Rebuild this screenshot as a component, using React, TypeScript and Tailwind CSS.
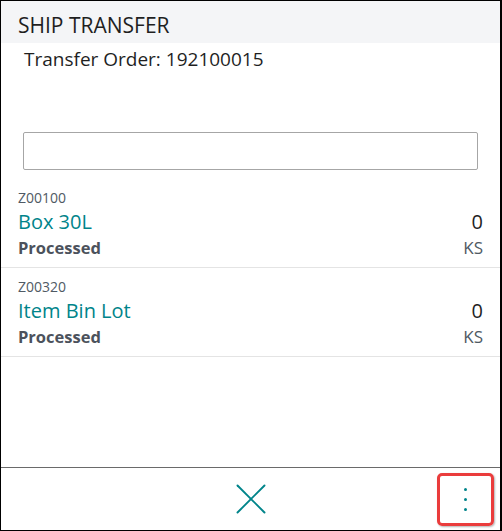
import { X } from 'lucide-react';

const items = [
  { code: 'Z00100', name: 'Box 30L', status: 'Processed', qty: '0', unit: 'KS' },
  { code: 'Z00320', name: 'Item Bin Lot', status: 'Processed', qty: '0', unit: 'KS' },
];

export default function App() {
  return (
    <div
      className="w-[502px] h-[531px] bg-white border-t border-l border-b border-r-2 border-black flex flex-col text-[#1f1f1f]"
      style={{ fontFamily: '"Open Sans", "Noto Sans", sans-serif' }}
    >
      {/* Header */}
      <div className="h-[42px] shrink-0 bg-[#f4f5f7] flex items-center px-[17px] pt-[6px]">
        <span className="text-[21px] leading-none">SHIP TRANSFER</span>
      </div>

      <div className="flex-1 flex flex-col">
        <div className="px-[23px] pt-[3px] text-[19px] leading-[26px]">Transfer Order: 192100015</div>

        <div className="px-[22px] pt-[60px] pb-[9px]">
          <input
            type="text"
            className="w-full h-[38px] border border-[#a6a6a6] rounded-[2px] px-2 outline-none"
          />
        </div>

        {items.map((it) => (
          <div key={it.code} className="h-[89px] border-b border-[#e4e4e4] px-[17px] pt-[9px] flex justify-between">
            <div className="flex flex-col">
              <span className="text-[14px] leading-[20px] text-[#505a64]">{it.code}</span>
              <span className="text-[20px] leading-[28px] text-[#00848a]">{it.name}</span>
              <span className="text-[16.5px] leading-[24px] font-bold text-[#4c525c]">{it.status}</span>
            </div>
            <div className="flex flex-col items-end pt-[20px]">
              <span className="text-[20px] leading-[28px]">{it.qty}</span>
              <span className="text-[17px] leading-[24px] text-[#505a64]">{it.unit}</span>
            </div>
          </div>
        ))}
      </div>

      {/* Footer */}
      <div className="h-[63px] shrink-0 border-t border-[#6a6a6a] flex items-center justify-center relative">
        <X className="w-[54px] h-[54px] text-[#00848a]" strokeWidth={0.85} />
        <div className="absolute right-[6px] top-[5px] w-[57px] h-[53px] border-[3px] border-[#ea3c3c] rounded-[5px] shadow-[1px_1px_2px_rgba(0,0,0,0.3)] flex flex-col items-center justify-center gap-[7px]">
          <span className="w-[3px] h-[3px] rounded-full bg-[#00848a]" />
          <span className="w-[3px] h-[3px] rounded-full bg-[#00848a]" />
          <span className="w-[3px] h-[3px] rounded-full bg-[#00848a]" />
        </div>
      </div>
    </div>
  );
}
